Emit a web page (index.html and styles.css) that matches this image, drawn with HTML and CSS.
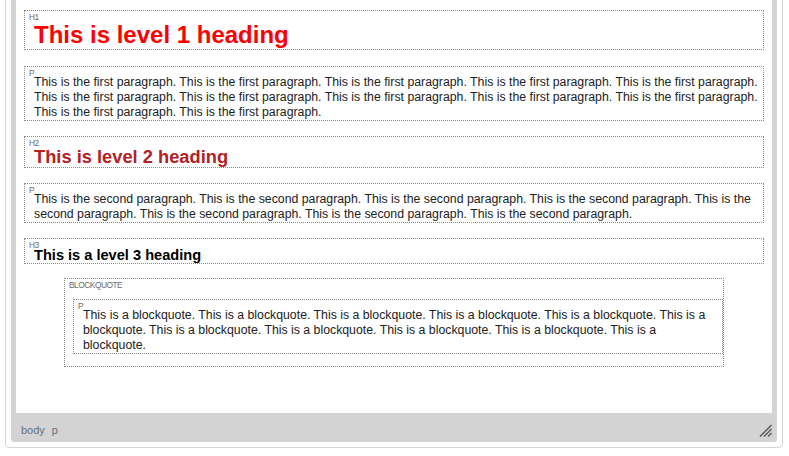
FILE: index.html
```html
<!DOCTYPE html>
<html>
<head>
<meta charset="utf-8">
<link rel="stylesheet" href="styles.css">
</head>
<body>
<div class="outer">
  <div class="frame">
    <div class="editor">
      <h1 class="blk h1"><span class="tag">H1</span>This is level 1 heading</h1>
      <p class="blk para"><span class="tag">P</span>This is the first paragraph. This is the first paragraph. This is the first paragraph. This is the first paragraph. This is the first paragraph. This is the first paragraph. This is the first paragraph. This is the first paragraph. This is the first paragraph. This is the first paragraph. This is the first paragraph. This is the first paragraph.</p>
      <h2 class="blk h2"><span class="tag">H2</span>This is level 2 heading</h2>
      <p class="blk para"><span class="tag">P</span>This is the second paragraph. This is the second paragraph. This is the second paragraph. This is the second paragraph. This is the second paragraph. This is the second paragraph. This is the second paragraph. This is the second paragraph.</p>
      <h3 class="blk h3"><span class="tag">H3</span>This is a level 3 heading</h3>
      <blockquote class="blk quote"><span class="tag">BLOCKQUOTE</span>
        <p class="blk para inner"><span class="tag">P</span>This is a blockquote. This is a blockquote. This is a blockquote. This is a blockquote. This is a blockquote. This is a blockquote. This is a blockquote. This is a blockquote. This is a blockquote. This is a blockquote. This is a blockquote.</p>
      </blockquote>
    </div>
    <div class="statusbar">
      <span class="path">body</span>
      <span class="path">p</span>
      <span class="grip"><svg width="13" height="13" viewBox="0 0 13 13"><g stroke="#5a5a5a" stroke-width="1.4" fill="none"><line x1="1" y1="12.5" x2="12.5" y2="1"/><line x1="5" y1="12.5" x2="12.5" y2="5"/><line x1="9" y1="12.5" x2="12.5" y2="9"/></g></svg></span>
    </div>
  </div>
</div>
</body>
</html>
```

FILE: styles.css
```css
html, body {
  margin: 0;
  padding: 0;
  background: #fff;
  overflow: hidden;
}

body {
  font-family: "Liberation Sans", Arial, sans-serif;
}

.outer {
  box-sizing: border-box;
  width: 778px;
  margin: -20px 0 0 5px;
  border: 1px solid #d6d6d6;
  border-radius: 4px;
  padding: 5px;
  background: #fff;
}

.frame {
  background: #d3d3d3;
  border-radius: 3px;
  padding: 5px 5px 0;
}

.editor {
  background: #fff;
  height: 422px;
  box-sizing: border-box;
  padding: 19px 8px 0;
  overflow: hidden;
}

.blk {
  position: relative;
  border: 1px dotted #8a8a8a;
  margin: 0;
  padding: 8px 2px 0 9px;
}

.tag {
  position: absolute;
  top: 2px;
  left: 4px;
  font-family: "Liberation Sans", Arial, sans-serif;
  font-size: 8.4px;
  font-weight: normal;
  letter-spacing: -0.5px;
  line-height: 1;
  color: #6a6a6a;
}

.h1 {
  font-size: 24px;
  font-weight: bold;
  line-height: 28px;
  padding-top: 10px;
  color: #ff0000;
  margin-bottom: 16px;
}

.h2 {
  font-size: 18.3px;
  font-weight: bold;
  line-height: 21px;
  padding-top: 9px;
  color: #b22222;
  margin-bottom: 15px;
}

.h3 {
  font-size: 14.6px;
  font-weight: bold;
  line-height: 16px;
  padding-top: 8px;
  color: #000;
  margin-bottom: 14px;
}

.para {
  font-size: 12.3px;
  line-height: 15px;
  color: #222;
  margin-bottom: 15px;
}

.quote {
  margin: 0 40px;
  padding: 20px 0 12px 8px;
}

.inner {
  margin: 0;
  padding-right: 9px;
}

.statusbar {
  height: 29px;
  box-sizing: border-box;
  padding: 11px 0 0 5px;
  display: flex;
  align-items: flex-start;
  gap: 7px;
  font-size: 11px;
  line-height: 13px;
  color: #66707c;
}

.grip {
  margin-left: auto;
  width: 13px;
  height: 13px;
  line-height: 0;
}
```
